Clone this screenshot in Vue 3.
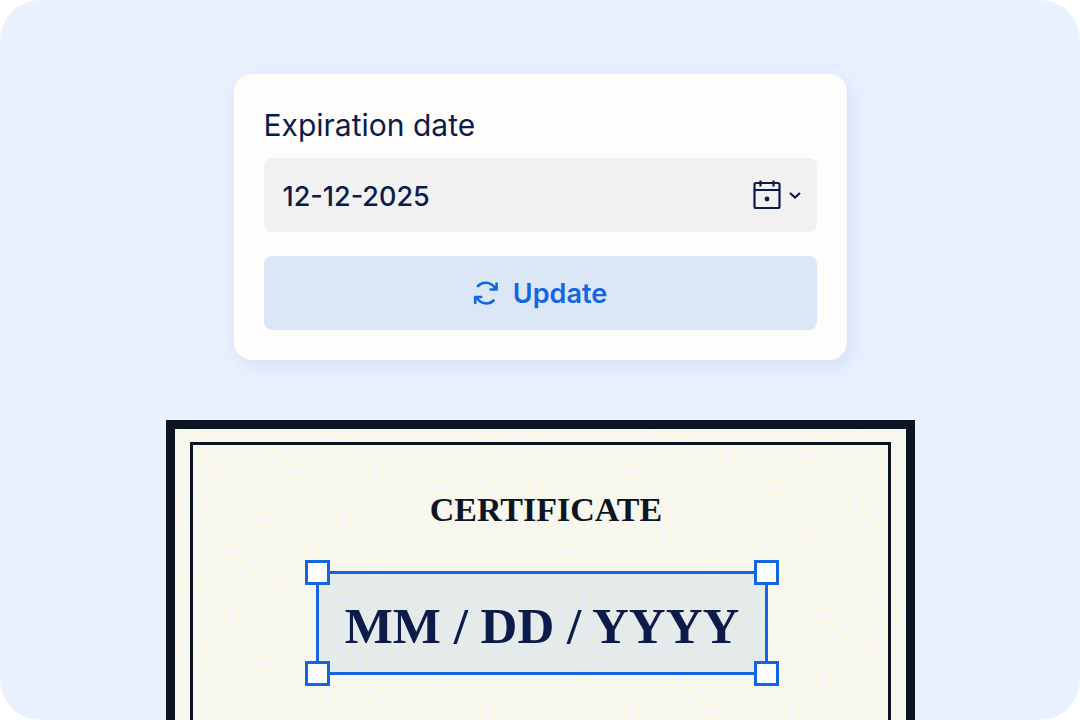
<script setup>
import { ref } from 'vue'

const date = ref('12-12-2025')

const radius = 41
const spacing = 11
const origin = { x: 122, y: 50 }

const arc = `c24 0 ${radius} 17 ${radius} ${radius} c0 24 17 ${radius} ${radius} ${radius} `
const waves = Array.from({ length: 121 }, (_, i) => {
  const step = i - 50
  const x = origin.x + step * spacing - radius * 16
  const y = origin.y - step * spacing - radius * 16
  return `M${x} ${y}` + arc.repeat(18)
})
</script>

<template>
  <main class="stage">
    <form class="card" @submit.prevent>
      <label class="label" for="expiration">Expiration date</label>
      <div class="field">
        <input id="expiration" v-model="date" class="date" type="text" />
        <button class="picker" type="button" aria-label="Open calendar">
          <svg class="calendar" viewBox="0 0 30 32" fill="none" stroke="currentColor" stroke-width="2.200">
            <rect x="2.5" y="4" width="25" height="25" rx="1.5" />
            <path d="M2 11h26M8.500 1.500v6M21.500 1.500v6" />
            <circle cx="15" cy="20" r="2.400" fill="currentColor" stroke="none" />
          </svg>
          <svg class="chevron" viewBox="0 0 12 8" fill="none" stroke="currentColor" stroke-width="2.200">
            <path d="M1 2L6 6.500l5-4.500" />
          </svg>
        </button>
      </div>
      <button class="update" type="submit">
        <svg class="refresh" viewBox="0 0 26 26" fill="none" stroke="currentColor" stroke-width="2.600" stroke-linecap="round" stroke-linejoin="round">
          <path d="M5 6C9.500 1.200 18 1.500 22.300 8.500M23.600 3.500v6h-6" />
          <path d="M20.500 20.500C16 25 7.500 24.500 3.700 17.500M2.200 23v-6h6" />
        </svg>
        Update
      </button>
    </form>

    <section class="certificate">
      <svg class="waves" aria-hidden="true">
        <path v-for="(d, i) in waves" :key="i" :d="d" />
      </svg>
      <div class="frame">
        <h1 class="title">CERTIFICATE</h1>
        <div class="selection">
          MM / DD / YYYY
          <span class="handle top left"></span>
          <span class="handle top right"></span>
          <span class="handle bottom left"></span>
          <span class="handle bottom right"></span>
        </div>
      </div>
    </section>
  </main>
</template>

<style>
body {
  margin: 0;
  background: #fff;
}
</style>

<style scoped>
.stage {
  box-sizing: border-box;
  height: 100vh;
  padding: 74px 24px 0;
  display: flex;
  flex-direction: column;
  align-items: center;
  gap: 60px;
  overflow: hidden;
  border-radius: 40px;
  background: #e9f1ff;
  color: #0d1b4a;
  font-family: Inter, "Liberation Sans", sans-serif;
}

.card {
  box-sizing: border-box;
  width: 100%;
  max-width: 613px;
  padding: 30px;
  display: flex;
  flex-direction: column;
  flex-shrink: 0;
  border-radius: 18px;
  background: #fffdfb;
  box-shadow: 4px 6px 20px rgba(60, 100, 140, 0.12);
}

.label {
  margin-bottom: 12px;
  font-size: 30px;
  line-height: 42px;
}

.field {
  display: flex;
  align-items: center;
  height: 74px;
  margin-bottom: 24px;
  border-radius: 8px;
  background: #f1f1f1;
}

.date {
  flex: 1;
  min-width: 0;
  box-sizing: border-box;
  height: 100%;
  padding: 2px 0 0 19px;
  border: 0;
  outline: 0;
  background: none;
  color: inherit;
  font: 500 27px Inter, "Liberation Sans", sans-serif;
}

.picker {
  display: flex;
  align-items: center;
  gap: 7px;
  padding: 0;
  margin-right: 16px;
  border: 0;
  background: none;
  color: inherit;
}

.calendar {
  width: 30px;
  height: 32px;
}

.chevron {
  width: 12px;
  height: 8px;
}

.update {
  display: flex;
  align-items: center;
  justify-content: center;
  gap: 14px;
  height: 74px;
  padding: 0;
  border: 0;
  border-radius: 8px;
  background: #dbe6f6;
  color: #1466df;
  font: 600 27px Inter, "Liberation Sans", sans-serif;
}

.refresh {
  width: 26px;
  height: 26px;
}

.certificate {
  position: relative;
  box-sizing: border-box;
  flex: 1;
  width: 100%;
  max-width: 749px;
  margin-bottom: -40px;
  padding: 13px 15px;
  display: flex;
  border: 9px solid #0b1524;
  background: #f7f6ef;
}

.waves {
  position: absolute;
  inset: 0;
  width: 100%;
  height: 100%;
  fill: none;
  stroke: #fafae0;
  stroke-width: 2;
}

.frame {
  position: relative;
  flex: 1;
  display: flex;
  flex-direction: column;
  align-items: center;
  border: 3px solid #0b1524;
}

.title {
  margin: 44px 0 40px;
  padding-left: 12px;
  color: #0b1524;
  font: 700 34px/42px "Liberation Serif", serif;
}

.selection {
  position: relative;
  box-sizing: border-box;
  margin-left: 4px;
  padding: 6px 26px 0;
  border: 3px solid #1466df;
  background: rgba(20, 102, 223, 0.08);
  color: #0d1b4a;
  font: 700 51px/92px "Liberation Serif", serif;
  white-space: nowrap;
}

.handle {
  position: absolute;
  box-sizing: border-box;
  width: 25px;
  height: 25px;
  border: 3px solid #1466df;
  background: #fff;
}

.top {
  top: -14px;
}

.bottom {
  bottom: -14px;
}

.left {
  left: -14px;
}

.right {
  right: -14px;
}
</style>
